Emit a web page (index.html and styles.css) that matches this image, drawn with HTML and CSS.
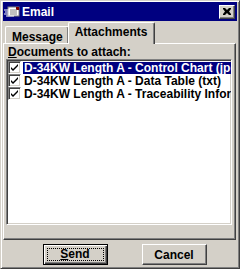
FILE: index.html
```html
<!DOCTYPE html>
<html lang="en">
<head>
    <meta charset="UTF-8">
    <title>Email</title>
    <link rel="stylesheet" href="styles.css">
</head>
<body>
    <div class="window">
        <div class="titlebar">
            <svg class="app-icon" width="16" height="14" viewBox="0 0 16 14">
                <rect x="4" y="2" width="11" height="9" fill="#fff" stroke="#808080"/>
                <rect x="12" y="2" width="3" height="3" fill="#800000"/>
                <path d="M0 5h8M1 7h8M0 9h8M2 11h8" stroke="#fff" stroke-width="1"/>
                <path d="M6 5h7M6 7h7M6 9h7" stroke="#808080"/>
            </svg>
            <span class="title">Email</span>
            <button class="close">
                <svg width="8" height="7" viewBox="0 0 8 7">
                    <path d="M0 0h2l2 2l2-2h2v1l-2 2.5l2 2.5v1h-2l-2-2l-2 2h-2v-1l2-2.5l-2-2.5z" fill="#000"/>
                </svg>
            </button>
        </div>

        <div class="tabs">
            <div class="tab">Message</div>
            <div class="tab active">Attachments</div>
        </div>

        <div class="panel">
            <div class="label"><u>D</u>ocuments to attach:</div>
            <div class="listbox">
                <div class="item selected">
                    <span class="check"></span>
                    <span class="text">D-34KW Length A - Control Chart (jpg)</span>
                </div>
                <div class="item">
                    <span class="check"></span>
                    <span class="text">D-34KW Length A - Data Table (txt)</span>
                </div>
                <div class="item">
                    <span class="check"></span>
                    <span class="text">D-34KW Length A - Traceability Information</span>
                </div>
            </div>
        </div>

        <div class="actions">
            <button class="btn default"><span class="focus"><u>S</u>end</span></button>
            <button class="btn">Cancel</button>
        </div>
    </div>
</body>
</html>
```

FILE: styles.css
```css
body {
    margin: 0;
    background: #d4d0c8;
    font-family: 'Liberation Sans', Arial, sans-serif;
    font-size: 11px;
    font-weight: bold;
}

.window {
    box-sizing: border-box;
    width: 240px;
    height: 269px;
    background: #d4d0c8;
    border: 1px solid;
    border-color: #d4d0c8 #404040 #404040 #d4d0c8;
    box-shadow: inset 1px 1px 0 #fff, inset -1px -1px 0 #808080;
    padding: 1px 2px 2px 2px;
    display: flex;
    flex-direction: column;
}

.titlebar {
    height: 19px;
    background: #000080;
    color: #fff;
    display: flex;
    align-items: center;
    padding: 0 2px 0 1px;
}

.app-icon {
    margin-right: 2px;
}

.title {
    flex: 1;
    font-size: 12px;
}

.close {
    width: 16px;
    height: 14px;
    padding: 0;
    background: #d4d0c8;
    border: 1px solid;
    border-color: #fff #404040 #404040 #fff;
    box-shadow: inset -1px -1px 0 #808080;
    display: flex;
    align-items: center;
    justify-content: center;
}

.tabs {
    display: flex;
    align-items: flex-end;
    height: 21px;
    margin-top: 1px;
    padding-left: 2px;
    position: relative;
    z-index: 1;
}

.tab {
    box-sizing: border-box;
    height: 17px;
    padding: 3px 5px 0 6px;
    border: 1px solid;
    border-bottom: none;
    border-color: #fff #404040 #404040 #fff;
    border-radius: 2px 2px 0 0;
    box-shadow: inset -1px 0 0 #808080;
    font-size: 12px;
}

.tab.active {
    height: 22px;
    padding: 2px 7px 0 6px;
    margin-bottom: -1px;
    margin-left: -1px;
    background: #d4d0c8;
}

.panel {
    height: 193px;
    margin: 0 1px 0 0;
    border: 1px solid;
    border-color: #fff #404040 #404040 #fff;
    box-shadow: inset -1px -1px 0 #808080;
    padding: 2px 3px 0 2px;
    display: flex;
    flex-direction: column;
}

.label {
    height: 13px;
    line-height: 13px;
    padding-left: 2px;
    font-size: 12px;
}

.listbox {
    height: 162px;
    background: #fff;
    border: 1px solid;
    border-color: #808080 #fff #fff #808080;
    box-shadow: inset 1px 1px 0 #404040, inset -1px -1px 0 #d4d0c8;
    padding: 1px;
    overflow: hidden;
}

.item {
    display: flex;
    align-items: center;
    height: 13px;
    white-space: nowrap;
}

.check {
    box-sizing: border-box;
    flex: none;
    width: 13px;
    height: 13px;
    margin-right: 2px;
    border: 1px solid;
    border-color: #808080 #fff #fff #808080;
    box-shadow: inset 1px 1px 0 #404040, inset -1px -1px 0 #d4d0c8;
    background: #fff url("data:image/svg+xml,%3Csvg xmlns='http://www.w3.org/2000/svg' width='11' height='11'%3E%3Cpath d='M2 5l2 2l5-5v2l-5 5l-2-2z' fill='%23000'/%3E%3C/svg%3E") no-repeat center;
}

.text {
    padding: 0 1px;
    line-height: 12px;
    font-size: 12px;
}

.item.selected .text {
    background: #000080;
    color: #fff;
}

.actions {
    display: flex;
    justify-content: center;
    gap: 34px;
    padding-top: 4px;
    padding-left: 9px;
}

.btn {
    box-sizing: border-box;
    width: 65px;
    height: 21px;
    padding: 0;
    background: #d4d0c8;
    font-family: 'Liberation Sans', Arial, sans-serif;
    font-size: 12px;
    font-weight: bold;
    border: 1px solid;
    border-color: #fff #404040 #404040 #fff;
    box-shadow: inset -1px -1px 0 #808080;
}

.btn.default {
    border: 1px solid #000;
    box-shadow: inset 1px 1px 0 #fff, inset -1px -1px 0 #404040, inset -2px -2px 0 #808080;
    padding: 3px;
}

.focus {
    display: block;
    height: 100%;
    box-sizing: border-box;
    border: 1px dotted #000;
    line-height: 11px;
}
```
